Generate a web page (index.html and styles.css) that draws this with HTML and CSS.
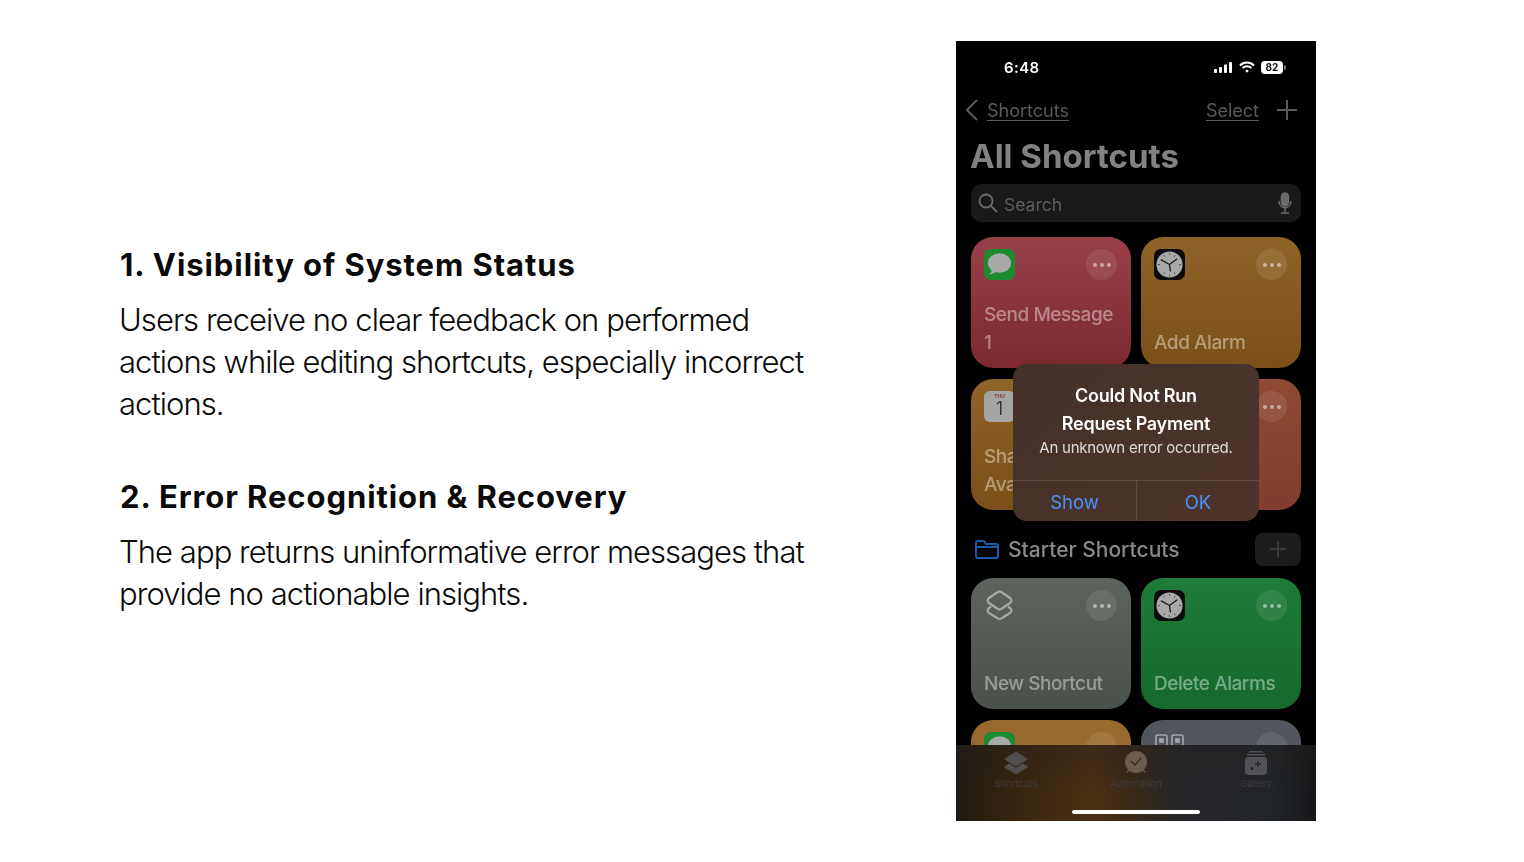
FILE: index.html
```html
<!DOCTYPE html>
<html lang="en">
<head>
  <meta charset="UTF-8" />
  <title>Heuristic evaluation - Shortcuts</title>
  <link rel="stylesheet" href="styles.css">
</head>
<body>
  <svg class="defs" width="0" height="0">
    <symbol id="clock" viewBox="0 0 32 32">
      <rect width="32" height="32" rx="7" fill="#0b0b0b"/>
      <circle cx="16" cy="16" r="13.5" fill="#a9a9a9"/>
      <path d="M16 16 7 11M16 16 24 10M16 16l1 7" stroke="#1b1b1b" stroke-width="1.4" fill="none"/>
      <path d="M16 4v2M16 26v2M4 16h2M26 16h2M10 6l1 2M22 6l-1 2M10 26l1-2M22 26l-1-2" stroke="#555" stroke-width="1"/>
    </symbol>
    <symbol id="bubble" viewBox="0 0 32 32">
      <rect width="32" height="32" rx="7" fill="#1c8a2e"/>
      <ellipse cx="16" cy="14.5" rx="12" ry="10" fill="#a8aaa8"/>
      <path d="M8 21c0 3-1 4-3 5 3 0 6-1 8-3z" fill="#a8aaa8"/>
    </symbol>
  </svg>

  <main class="slide">
    <section class="notes">
      <h2>1. Visibility of System Status</h2>
      <p>Users receive no clear feedback on performed actions while editing shortcuts, especially incorrect actions.</p>
      <h2>2. Error Recognition &amp; Recovery</h2>
      <p>The app returns uninformative error messages that provide no actionable insights.</p>
    </section>

    <section class="phone">
      <div class="status">
        <span class="time">6:48</span>
        <span class="status-icons">
          <svg width="19" height="11" viewBox="0 0 19 11" fill="#fff">
            <rect x="0" y="7" width="3" height="4" rx=".8"/>
            <rect x="5" y="5" width="3" height="6" rx=".8"/>
            <rect x="10" y="2.500" width="3" height="8.500" rx=".8"/>
            <rect x="15" y="0" width="3" height="11" rx=".8"/>
          </svg>
          <svg width="16" height="12" viewBox="0 0 16 12" fill="none" stroke="#fff" stroke-width="2">
            <path d="M1 4.500c4-4 10-4 14 0M3.500 7c2.500-2.500 6.500-2.500 9 0"/>
            <circle cx="8" cy="10" r="1" fill="#fff" stroke-width="1"/>
          </svg>
          <span class="battery">82</span>
        </span>
      </div>

      <div class="nav">
        <a class="back">
          <svg width="14" height="22" viewBox="0 0 14 22" fill="none" stroke="#5b5b5b" stroke-width="2">
            <path d="M12 1 2 11l10 10"/>
          </svg>
          <span>Shortcuts</span>
        </a>
        <div class="nav-right">
          <span>Select</span>
          <svg width="22" height="22" viewBox="0 0 22 22" stroke="#5b5b5b" stroke-width="2">
            <path d="M11 1v20M1 11h20"/>
          </svg>
        </div>
      </div>

      <h1>All Shortcuts</h1>

      <div class="search">
        <svg width="20" height="20" viewBox="0 0 20 20" fill="none" stroke="#6a6a6a" stroke-width="1.800">
          <circle cx="8" cy="8" r="6.500"/>
          <path d="m13 13 6 6"/>
        </svg>
        <span>Search</span>
        <svg class="mic" width="14" height="22" viewBox="0 0 14 22" fill="none" stroke="#6a6a6a" stroke-width="1.500">
          <rect x="3.500" y="1" width="7" height="13" rx="3.500" fill="#6a6a6a"/>
          <path d="M1 9c0 9 12 9 12 0M7 16v4M3 21h8"/>
        </svg>
      </div>

      <div class="cards">
        <div class="card red">
          <div class="card-top">
            <svg class="app" width="31" height="31"><use href="#bubble"/></svg>
            <span class="more"><i></i><i></i><i></i></span>
          </div>
          <div class="label">Send Message<br>1</div>
        </div>
        <div class="card orange">
          <div class="card-top">
            <svg class="app" width="31" height="31"><use href="#clock"/></svg>
            <span class="more"><i></i><i></i><i></i></span>
          </div>
          <div class="label">Add Alarm</div>
        </div>
        <div class="card orange">
          <div class="card-top">
            <div class="calendar"><b>THU</b><span>1</span></div>
          </div>
          <div class="label">Share<br>Available</div>
        </div>
        <div class="card brick">
          <div class="card-top">
            <span></span>
            <span class="more"><i></i><i></i><i></i></span>
          </div>
        </div>
      </div>

      <div class="folder-row">
        <svg width="24" height="19" viewBox="0 0 24 19" fill="none" stroke="#1a5cab" stroke-width="2">
          <path d="M1 16V3a2 2 0 0 1 2-2h6l2 3h10a2 2 0 0 1 2 2v10a2 2 0 0 1-2 2H3a2 2 0 0 1-2-2zM1 7h22"/>
        </svg>
        <span class="folder-name">Starter Shortcuts</span>
        <span class="folder-add">
          <svg width="18" height="18" viewBox="0 0 18 18" stroke="#444" stroke-width="1.600">
            <path d="M9 1v16M1 9h16"/>
          </svg>
        </span>
      </div>

      <div class="cards">
        <div class="card slate">
          <div class="card-top">
            <svg class="app" width="31" height="31" viewBox="0 0 31 31" fill="none" stroke="#a5a9a5" stroke-width="2.200">
              <path d="M13 2.500a4 4 0 0 1 5 0l8 5.500a3 3 0 0 1 0 5l-8 5.500a4 4 0 0 1-5 0L5 13a3 3 0 0 1 0-5z"/>
              <path d="M7 16.500 5 18a3 3 0 0 0 0 5l8 5a4 4 0 0 0 5 0l8-5a3 3 0 0 0 0-5l-2-1.500"/>
            </svg>
            <span class="more"><i></i><i></i><i></i></span>
          </div>
          <div class="label">New Shortcut</div>
        </div>
        <div class="card green">
          <div class="card-top">
            <svg class="app" width="31" height="31"><use href="#clock"/></svg>
            <span class="more"><i></i><i></i><i></i></span>
          </div>
          <div class="label">Delete Alarms</div>
        </div>
        <div class="card orange-light">
          <div class="card-top">
            <svg class="app" width="31" height="31"><use href="#bubble"/></svg>
            <span class="more"></span>
          </div>
        </div>
        <div class="card steel">
          <div class="card-top">
            <svg class="app" width="31" height="31" viewBox="0 0 31 31" fill="none" stroke="#a5a9ad" stroke-width="1.600">
              <rect x="2" y="3" width="11" height="11" rx="1.500"/>
              <rect x="18" y="3" width="11" height="11" rx="1.500"/>
              <rect x="6" y="7" width="3" height="3" fill="#a5a9ad"/>
              <rect x="22" y="7" width="3" height="3" fill="#a5a9ad"/>
            </svg>
            <span class="more"></span>
          </div>
        </div>
      </div>

      <nav class="tabbar">
        <div class="tab">
          <svg width="24" height="24" viewBox="0 0 24 24" fill="#4f4f4f" stroke="#4f4f4f" stroke-width="2" stroke-linejoin="round">
            <path d="M12 1.500 22.500 8 12 14.500 1.500 8z"/>
            <path d="M5 13.500 12 18l7-4.500 3.500 2.500L12 22.500 1.500 16z"/>
          </svg>
          <span>Shortcuts</span>
        </div>
        <div class="tab">
          <svg width="24" height="24" viewBox="0 0 24 24">
            <circle cx="12" cy="11" r="11" fill="#6a5c4e"/>
            <path d="M7 10l4 4 6-7" stroke="#3a3128" stroke-width="1.600" fill="none"/>
            <path d="M3 21l2-2M21 21l-2-2" stroke="#6a5c4e" stroke-width="1.600"/>
          </svg>
          <span>Automation</span>
        </div>
        <div class="tab">
          <svg width="24" height="24" viewBox="0 0 24 24" fill="#505255">
            <rect x="5" y="0" width="14" height="1.500"/>
            <rect x="3" y="3" width="18" height="1.500"/>
            <rect x="1" y="6" width="22" height="18" rx="3"/>
            <path d="M14 10v6M11 13h6M8 16v3M6.500 17.500h3" stroke="#26282b" stroke-width="1.500"/>
          </svg>
          <span>Gallery</span>
        </div>
        <div class="home-bar"></div>
      </nav>

      <div class="alert">
        <div class="alert-body">
          <div class="alert-title">Could Not Run<br>Request Payment</div>
          <div class="alert-msg">An unknown error occurred.</div>
        </div>
        <div class="alert-actions">
          <span>Show</span>
          <span>OK</span>
        </div>
      </div>
    </section>
  </main>
</body>
</html>
```

FILE: styles.css
```css
* {
  box-sizing: border-box;
}
html, body {
  margin: 0;
  height: 100%;
  background: #fff;
}
.defs {
  position: absolute;
}
.slide {
  display: flex;
  align-items: center;
  height: 862px;
  padding-left: 120px;
  font-family: Inter, sans-serif;
  overflow: hidden;
}

/* left column */
.notes {
  width: 700px;
  margin-right: 136px;
  margin-bottom: 3px;
  color: #0a0a0a;
}
.notes h2 {
  margin: 0 0 13px;
  font-size: 31px;
  line-height: 42px;
  font-weight: 700;
  letter-spacing: 0.92px;
}
.notes p {
  margin: 0 0 51px;
  font-size: 31px;
  line-height: 42px;
  font-weight: 300;
  letter-spacing: -0.95px;
  margin-left: -1px;
}
.notes p:last-child {
  margin-bottom: 0;
}

/* phone */
.phone {
  position: relative;
  flex: none;
  width: 360px;
  height: 780px;
  padding: 0 15px;
  background: #000;
  overflow: hidden;
  color: #7c7c7c;
  filter: blur(0.4px);
}
.status {
  display: flex;
  align-items: center;
  justify-content: space-between;
  height: 54px;
  padding: 0 15px 2px 33px;
  color: #fff;
}
.time {
  font-size: 15px;
  font-weight: 600;
  letter-spacing: 0.4px;
}
.status-icons {
  position: relative;
  display: flex;
  align-items: center;
  gap: 6px;
}
.status-icons::after {
  content: "";
  width: 2px;
  height: 5px;
  margin-left: -5px;
  border-radius: 0 2px 2px 0;
  background: #777;
}
.battery {
  width: 22px;
  height: 13px;
  border-radius: 4px;
  background: #fff;
  color: #111;
  font-size: 10px;
  line-height: 13px;
  font-weight: 700;
  text-align: center;
}
.nav {
  display: flex;
  align-items: center;
  justify-content: space-between;
  height: 30px;
  margin-left: -6px;
  font-size: 18px;
  color: #5b5b5b;
}
.back {
  display: flex;
  align-items: center;
  gap: 8px;
}
.nav span {
  text-decoration: underline;
  text-underline-offset: 3px;
  text-decoration-thickness: 1px;
}
.nav-right {
  display: flex;
  align-items: center;
  gap: 17px;
  padding-right: 3px;
}
.phone h1 {
  margin: 0 0 0 -1px;
  height: 59px;
  font-size: 33px;
  line-height: 62px;
  font-weight: 700;
  color: #828282;
}
.search {
  display: flex;
  align-items: center;
  gap: 6px;
  height: 38px;
  padding: 0 9px 0 7px;
  border-radius: 10px;
  background: #19191b;
  font-size: 17.5px;
  color: #5e5e5e;
}
.search span {
  padding-top: 2px;
}
.mic {
  margin-left: auto;
}
.cards {
  display: grid;
  grid-template-columns: 160px 160px;
  grid-auto-rows: 131px;
  gap: 11px 10px;
  margin-top: 15px;
}
.card {
  display: flex;
  flex-direction: column;
  justify-content: space-between;
  padding: 12px 14px 11px 13px;
  border-radius: 22px;
}
.card-top {
  display: flex;
  justify-content: space-between;
}
.more {
  display: flex;
  align-items: center;
  justify-content: center;
  gap: 3px;
  width: 31px;
  height: 31px;
  border-radius: 50%;
  background: rgba(255, 255, 255, 0.09);
}
.more i {
  width: 4px;
  height: 4px;
  border-radius: 50%;
  background: rgba(255, 255, 255, 0.5);
}
.app {
  display: block;
}
.label {
  font-size: 19px;
  line-height: 28px;
  font-weight: 500;
  letter-spacing: -0.45px;
  color: rgba(255, 255, 255, 0.42);
}
.red {
  background: linear-gradient(#98404a, #7c2932);
}
.orange {
  background: linear-gradient(#8f6428, #7a4f19);
}
.brick {
  background: linear-gradient(#8f4a34, #813c2e);
}
.slate {
  background: linear-gradient(#5d645e, #4a514b);
}
.green {
  background: linear-gradient(#1e7c38, #156a2c);
}
.orange-light {
  background: #986a2e;
}
.steel {
  background: #51565e;
}
.calendar {
  width: 31px;
  height: 31px;
  border-radius: 6px;
  background: #a5a5a5;
  color: #222;
  text-align: center;
  line-height: 1;
}
.calendar b {
  display: block;
  padding-top: 3px;
  font-size: 5px;
  color: #8b3a3a;
}
.calendar span {
  font-size: 19px;
  font-weight: 300;
}
.folder-row {
  display: flex;
  align-items: center;
  gap: 9px;
  height: 34px;
  margin-top: 22px;
  margin-bottom: -3px;
  padding-left: 4px;
  font-size: 21px;
  font-weight: 500;
  color: #8a8a8a;
}
.folder-add {
  display: flex;
  align-items: center;
  justify-content: center;
  width: 46px;
  height: 33px;
  margin-left: auto;
  border-radius: 8px;
  background: #1c1c1e;
}

/* overlays */
.tabbar {
  position: absolute;
  left: 0;
  right: 0;
  bottom: 0;
  display: flex;
  justify-content: space-around;
  height: 76px;
  padding-top: 6px;
  background:
    linear-gradient(rgba(32, 30, 28, 0.35), transparent 65%),
    linear-gradient(90deg, #1f1a15 0%, #33250f 14%, #4c2f10 38%, #3a2a18 48%, #26272a 62%, #222528 88%, #151618 100%);
}
.tab {
  display: flex;
  flex-direction: column;
  align-items: center;
  gap: 3px;
  width: 120px;
  font-size: 9.5px;
  color: #403e3b;
}
.home-bar {
  position: absolute;
  left: 116px;
  bottom: 7px;
  width: 128px;
  height: 4px;
  border-radius: 2px;
  background: #fff;
}
.alert {
  position: absolute;
  left: 57px;
  top: 323px;
  width: 246px;
  height: 157px;
  border-radius: 14px;
  background: linear-gradient(135deg, #433129, #4d342b);
  color: #fff;
  text-align: center;
}
.alert-body {
  height: 116px;
  padding-top: 18px;
}
.alert-title {
  font-size: 18px;
  line-height: 28px;
  font-weight: 600;
  letter-spacing: -0.25px;
}
.alert-msg {
  font-size: 15px;
  line-height: 20px;
  letter-spacing: -0.25px;
  color: #ddd;
}
.alert-actions {
  display: grid;
  grid-template-columns: 1fr 1fr;
  height: 41px;
  border-top: 1px solid #5f4c44;
  font-size: 18.5px;
  color: #4d90f5;
}
.alert-actions span {
  padding-top: 10px;
}
.alert-actions span + span {
  border-left: 1px solid #5f4c44;
}
```
